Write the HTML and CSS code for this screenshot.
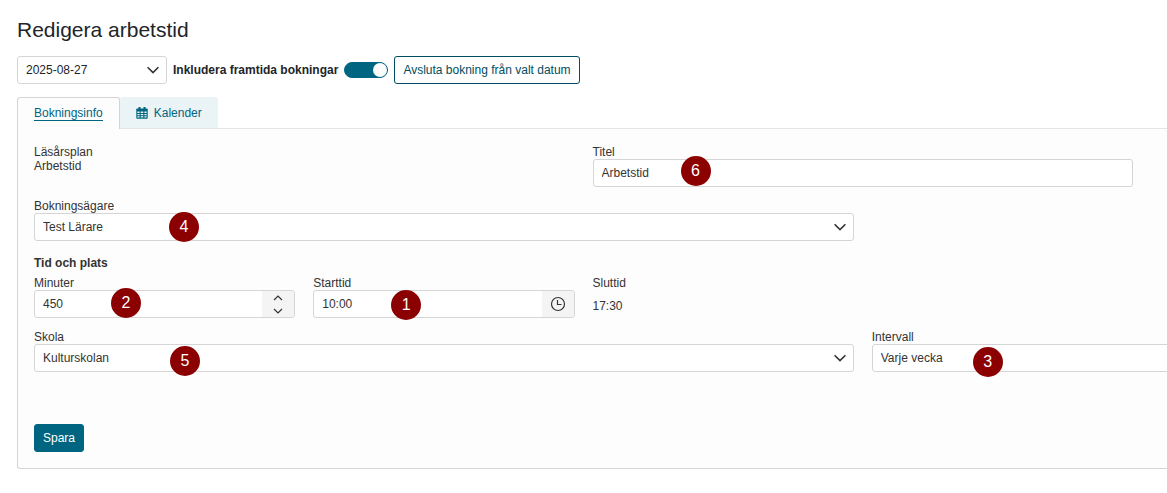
FILE: index.html
```html
<!DOCTYPE html>
<html lang="sv">
<head>
    <meta charset="UTF-8">
    <meta name="viewport" content="width=device-width, initial-scale=1.0">
    <title>Redigera arbetstid</title>
    <link rel="stylesheet" href="styles.css">
</head>
<body>
    <h1>Redigera arbetstid</h1>

    <div class="toolbar">
        <div class="select date-select">
            <select aria-label="Datum">
                <option>2025-08-27</option>
            </select>
            <svg class="chevron" viewBox="0 0 12 8"><path d="M0.6 1.2L6 6.6l5.4-5.4"/></svg>
        </div>
        <label class="bold" for="future">Inkludera framtida bokningar</label>
        <input class="switch" type="checkbox" id="future" checked>
        <button class="btn btn-outline" type="button">Avsluta bokning från valt datum</button>
    </div>

    <nav class="tabs">
        <a class="tab active" href="#info"><span>Bokningsinfo</span></a>
        <a class="tab" href="#kalender">
            <svg class="calendar" viewBox="0 0 12 12">
                <path d="M1 1.5h10q.7 0 .7.7v8.6q0 .9-.9.9H1.2q-.9 0-.9-.9V2.200q0-.7.7-.7z"/>
                <path class="rings" d="M3.500 0v3M8.500 0v3"/>
                <path class="cells" d="M1.400 4.500h2.200v1.400H1.400zM4.700 4.500h2.600v1.400H4.700zM8.400 4.500h2.200v1.400H8.400zM1.400 6.900h2.200v1.400H1.400zM4.700 6.900h2.600v1.400H4.700zM8.400 6.900h2.200v1.400H8.400zM1.400 9.300h2.200v1.300H1.400zM4.700 9.300h2.600v1.300H4.700zM8.400 9.300h2.200v1.300H8.400z"/>
            </svg>
            <span>Kalender</span>
        </a>
    </nav>

    <form class="panel" id="info">
        <div class="grid">
            <div class="field span-2">
                <span>Läsårsplan</span>
                <span>Arbetstid</span>
            </div>
            <div class="field span-2">
                <label for="title">Titel</label>
                <input class="input" type="text" id="title" value="Arbetstid">
                <span class="badge badge-6">6</span>
            </div>
            <div class="field span-3">
                <label for="owner">Bokningsägare</label>
                <div class="select">
                    <select id="owner">
                        <option>Test Lärare</option>
                    </select>
                    <svg class="chevron" viewBox="0 0 12 8"><path d="M0.6 1.2L6 6.6l5.4-5.4"/></svg>
                </div>
                <span class="badge badge-4">4</span>
            </div>
        </div>

        <h2>Tid och plats</h2>

        <div class="grid">
            <div class="field">
                <label for="minutes">Minuter</label>
                <div class="group">
                    <input type="text" id="minutes" value="450">
                    <div class="addon spinner">
                        <button type="button" aria-label="Öka"><svg viewBox="0 0 10 6"><path d="M1 5l4-4 4 4"/></svg></button>
                        <button type="button" aria-label="Minska"><svg viewBox="0 0 10 6"><path d="M1 1l4 4 4-4"/></svg></button>
                    </div>
                </div>
                <span class="badge badge-2">2</span>
            </div>
            <div class="field">
                <label for="start">Starttid</label>
                <div class="group">
                    <input type="text" id="start" value="10:00">
                    <button class="addon" type="button" aria-label="Välj tid">
                        <svg class="clock" viewBox="0 0 16 16"><circle cx="8" cy="8" r="6.5"/><path d="M7.500 4v4.500H11.500"/></svg>
                    </button>
                </div>
                <span class="badge badge-1">1</span>
            </div>
            <div class="field">
                <span>Sluttid</span>
                <span class="static">17:30</span>
            </div>
            <div class="field new-row">
                <label for="school">Skola</label>
                <div class="select">
                    <select id="school">
                        <option>Kulturskolan</option>
                    </select>
                    <svg class="chevron" viewBox="0 0 12 8"><path d="M0.6 1.2L6 6.6l5.4-5.4"/></svg>
                </div>
                <span class="badge badge-5">5</span>
            </div>
            <div class="field bleed">
                <label for="interval">Intervall</label>
                <div class="select">
                    <select id="interval">
                        <option>Varje vecka</option>
                    </select>
                </div>
                <span class="badge badge-3">3</span>
            </div>
        </div>

        <button class="btn btn-primary" type="submit">Spara</button>
    </form>
</body>
</html>
```
FILE: styles.css
```css
* {
    box-sizing: border-box;
}
body {
    margin: 0;
    padding: 18px 0 24px 17px;
    background: #fff;
    color: #212529;
    font: 12px/14px "Liberation Sans", Arial, sans-serif;
    overflow-x: hidden;
}
h1 {
    margin: 0 0 14px;
    font-size: 21px;
    line-height: 24px;
    font-weight: normal;
}
h2 {
    margin: 15px 0 6px;
    font-size: 12px;
    line-height: 14px;
}
input,
select,
button {
    margin: 0;
    font: inherit;
    color: inherit;
}
svg {
    fill: none;
    stroke: #333;
}

.toolbar {
    display: flex;
    align-items: center;
    gap: 6px;
    margin-bottom: 13px;
}
.bold {
    font-weight: bold;
}
.date-select {
    width: 150px;
}
.switch {
    appearance: none;
    display: flex;
    justify-content: flex-end;
    width: 44px;
    height: 16px;
    border: 1px solid #006580;
    border-radius: 8px;
    background: #006580;
}
.switch::before {
    content: "";
    width: 14px;
    height: 14px;
    border-radius: 50%;
    background: #fcfcfc;
}
.switch:not(:checked) {
    justify-content: flex-start;
    background: #999;
}

.btn {
    height: 28px;
    padding: 0 8px;
    border: 1px solid #006580;
    border-radius: 3px;
}
.btn-outline {
    background: #fff;
    border-color: #004d61;
    color: #004d61;
}
.btn-primary {
    display: block;
    margin-top: 52px;
    background: #006580;
    color: #fff;
}

.tabs {
    display: flex;
}
.tab {
    display: flex;
    align-items: center;
    gap: 6px;
    height: 31px;
    padding: 0 16px;
    border-radius: 3px 3px 0 0;
    background: #eaf3f5;
    color: #006580;
    text-decoration: none;
}
/* covers the top border of the panel */
.tab.active {
    height: 32px;
    margin-bottom: -1px;
    border: 1px solid #d5d5d5;
    border-bottom: 0;
    background: #fdfdfd;
    z-index: 1;
}
.tab.active span {
    border-bottom: 1px solid #006580;
}
.calendar {
    width: 12px;
    height: 12px;
    fill: #006580;
    stroke: none;
}
.calendar .rings {
    stroke: #006580;
    stroke-width: 2;
}
.calendar .cells {
    fill: #eaf3f5;
}

.panel {
    padding: 16px 34px 16px 16px;
    border: 1px solid #d5d5d5;
    border-top-color: #e5e5e5;
    border-right: 0;
    border-radius: 0 0 0 3px;
    background: #fdfdfd;
    color: #333;
}
.grid {
    display: grid;
    grid-template-columns: repeat(4, 1fr);
    gap: 12px 18px;
}
.field {
    position: relative;
    display: flex;
    flex-direction: column;
    min-width: 0;
}
.span-2 {
    grid-column: span 2;
}
.span-3 {
    grid-column: span 3;
}
.new-row {
    grid-column: 1 / span 3;
}
/* runs on past the right edge of the window */
.bleed {
    margin-right: -40px;
}
.static {
    padding-top: 9px;
}

.input,
.select select,
.group {
    width: 100%;
    height: 28px;
    border: 1px solid #d5d5d5;
    border-radius: 3px;
    background: #fff;
}
.input,
.select select,
.group input {
    padding: 0 8px;
}
.select {
    position: relative;
}
.select select {
    appearance: none;
}
.chevron {
    position: absolute;
    top: 10px;
    right: 8px;
    width: 12px;
    height: 8px;
    stroke-width: 1.6;
    pointer-events: none;
}
.group {
    display: flex;
    overflow: hidden;
}
.group input {
    flex: 1;
    min-width: 0;
    border: 0;
    background: none;
}
.addon {
    display: flex;
    align-items: center;
    justify-content: center;
    width: 32px;
    padding: 0;
    border: 0;
    background: #f4f4f4;
}
.spinner {
    flex-direction: column;
}
.spinner button {
    display: flex;
    align-items: center;
    justify-content: center;
    width: 100%;
    height: 13px;
    padding: 0;
    border: 0;
    background: none;
}
.spinner svg {
    width: 10px;
    height: 6px;
    stroke-width: 1.2;
}
.clock {
    width: 16px;
    height: 16px;
    stroke-width: 1.2;
}

.badge {
    position: absolute;
    top: 13px;
    width: 30px;
    height: 30px;
    border-radius: 50%;
    background: #8b0000;
    color: #fff;
    font-size: 16px;
    line-height: 30px;
    text-align: center;
}
.badge-1 {
    left: 78px;
    top: 14px;
}
.badge-2 {
    left: 77px;
    top: 12px;
}
.badge-3 {
    left: 101px;
    top: 17px;
}
.badge-4 {
    left: 135px;
}
.badge-5 {
    left: 136px;
    top: 16px;
}
.badge-6 {
    left: 88px;
    top: 11px;
}
```
